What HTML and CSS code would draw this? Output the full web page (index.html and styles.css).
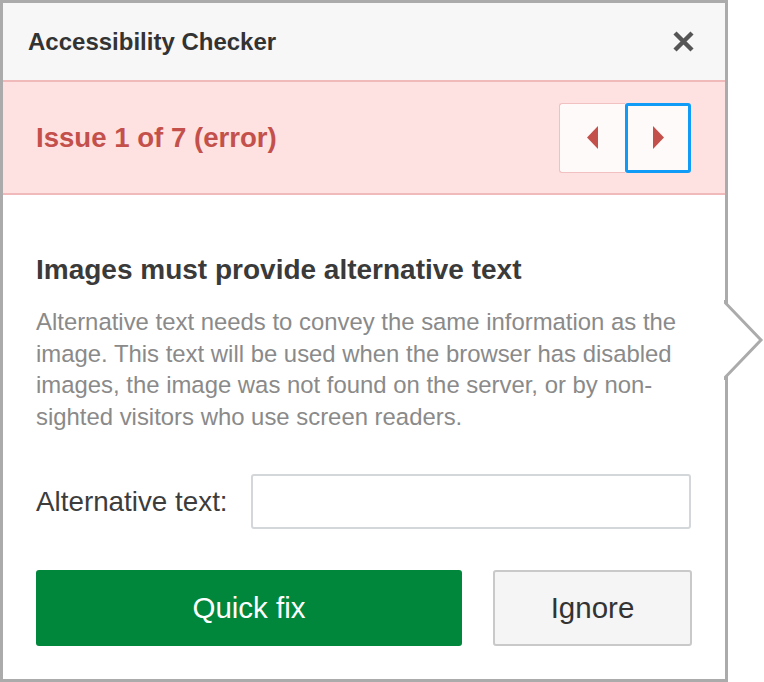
FILE: index.html
```html
<!DOCTYPE html>
<html lang="en">
<head>
<meta charset="utf-8">
<title>Accessibility Checker</title>
<link rel="stylesheet" href="styles.css">
</head>
<body>
<div class="balloon">
  <div class="header">
    <span class="title">Accessibility Checker</span>
    <button class="close" aria-label="Close">
      <svg width="23" height="23" viewBox="0 0 23 23"><path d="M3 3 L20 20 M20 3 L3 20" stroke="#555" stroke-width="4.4" stroke-linecap="butt"/></svg>
    </button>
  </div>
  <div class="issuebar">
    <span class="issue">Issue 1 of 7 (error)</span>
    <div class="nav">
      <button class="navbtn prev" aria-label="Previous"><svg width="12" height="23" viewBox="0 0 12 23"><polygon points="11,0 11,23 0,11.5" fill="#c4504b"/></svg></button>
      <button class="navbtn next" aria-label="Next"><svg width="12" height="23" viewBox="0 0 12 23"><polygon points="1,0 1,23 12,11.5" fill="#c4504b"/></svg></button>
    </div>
  </div>
  <div class="content">
    <h2 class="heading">Images must provide alternative text</h2>
    <p class="desc">Alternative text needs to convey the same information as the image. This text will be used when the browser has disabled images, the image was not found on the server, or by non-sighted visitors who use screen readers.</p>
    <div class="field">
      <label class="label" for="alt">Alternative text:</label>
      <input class="input" id="alt" type="text">
    </div>
    <div class="actions">
      <button class="btn primary">Quick fix</button>
      <button class="btn secondary">Ignore</button>
    </div>
  </div>
  <svg class="arrow" width="42" height="80" viewBox="0 0 42 80"><polygon points="0,3 1.5,3 37,40 1.5,77 0,77" fill="#fff"/><polyline points="1.5,0 1.5,3 37,40 1.5,77 1.5,80" fill="none" stroke="#ababab" stroke-width="3"/></svg>
</div>
</body>
</html>
```
FILE: styles.css
```css
* { box-sizing: border-box; }
html, body { margin: 0; padding: 0; background: #fff; }
body { font-family: "Liberation Sans", Arial, sans-serif; }

.balloon {
  position: relative;
  width: 728px;
  height: 682px;
  border: 3px solid #ababab;
  background: #fff;
  display: flex;
  flex-direction: column;
}

.header {
  height: 77px;
  background: #f7f7f7;
  display: flex;
  align-items: center;
  justify-content: space-between;
  padding: 0 30px 0 25px;
}
.title { font-size: 24px; font-weight: bold; color: #333; }
.close { border: 0; background: none; padding: 0; width: 23px; height: 23px; display: flex; }

.issuebar {
  height: 115px;
  background: #fee2e2;
  border-top: 2px solid #f1baba;
  border-bottom: 2px solid #f1baba;
  display: flex;
  align-items: center;
  justify-content: space-between;
  padding: 0 34px 0 33px;
}
.issue { font-size: 27.6px; font-weight: bold; color: #c4504b; }
.nav { display: flex; }
.navbtn {
  width: 66px;
  height: 70px;
  background: #fffafa;
  padding: 0;
  display: flex;
  align-items: center;
  justify-content: center;
}
.prev { border: 1px solid #f1c0c0; border-right: 0; border-radius: 3px 0 0 3px; }
.next { border: 3px solid #109cf6; border-radius: 3px; }

.content { padding: 58px 33px 0 33px; }
.heading { margin: 0; font-size: 28px; line-height: 34px; font-weight: bold; color: #3a3a3a; }
.desc { margin: 19px 0 0 0; font-size: 23.9px; line-height: 31.5px; color: #8a8a8a; }

.field { display: flex; align-items: center; gap: 23px; margin-top: 42px; }
.label { font-size: 27.8px; color: #3c3c3c; white-space: nowrap; }
.input { flex: 1; height: 55px; border: 2px solid #d4d7da; border-radius: 3px; background: #fff; margin-right: 1px; }

.actions { display: flex; gap: 31px; margin-top: 41px; }
.btn { height: 76px; font-family: "Liberation Sans", Arial, sans-serif; font-size: 29.5px; border-radius: 3px; padding: 0; }
.primary { width: 426px; background: #00873c; color: #fff; border: 0; }
.secondary { width: 199px; background: #f5f5f5; color: #333; border: 2px solid #c9c9c9; }

.arrow { position: absolute; left: 721px; top: 297px; }
```
